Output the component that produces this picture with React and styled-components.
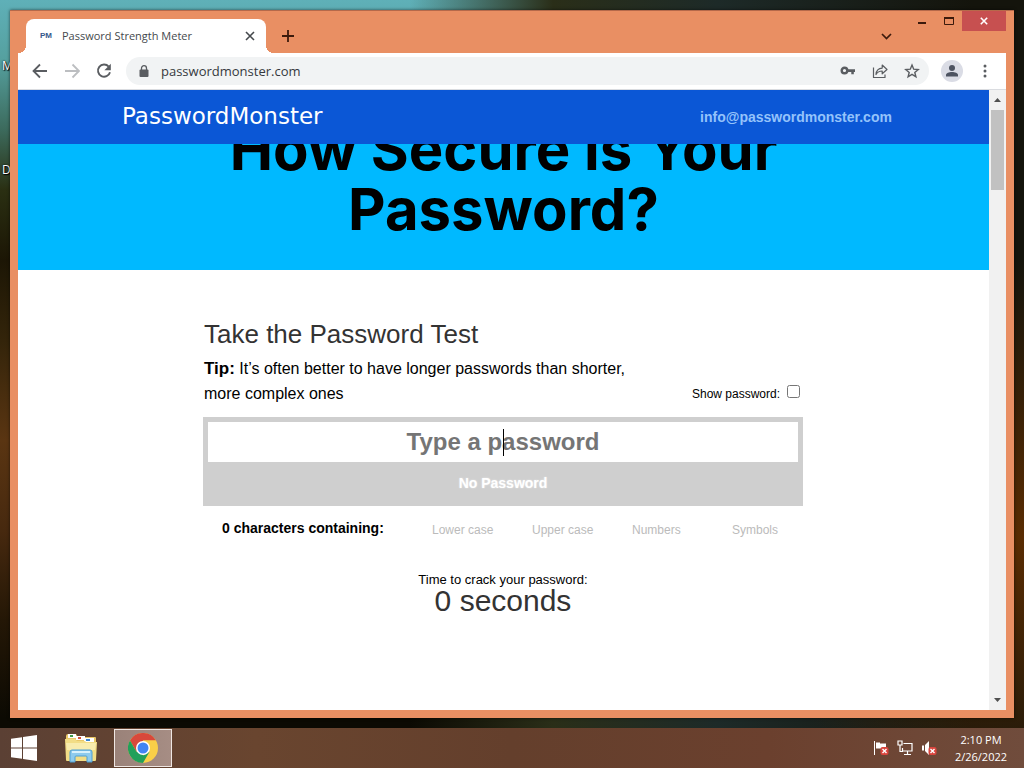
import React from "react";

import styled, { createGlobalStyle } from "styled-components";

const GlobalStyle = createGlobalStyle`
  * {
    box-sizing: border-box;
  }

  body {
    margin: 0;
    font-family: "Liberation Sans", Arial, sans-serif;
    color: #000;
  }

  button {
    padding: 0;
    border: 0;
    background: none;
    color: inherit;
    font: inherit;
  }

  a {
    color: inherit;
    text-decoration: none;
  }

  svg {
    display: block;
  }
`;

const uiFont = `"Open Sans", "Noto Sans", sans-serif`;

const Desktop = styled.div`
  position: relative;
  display: flex;
  flex-direction: column;
  min-height: 100vh;
  background:
    radial-gradient(circle at 100% 70%, #5a2c02 0, transparent 280px),
    linear-gradient(to right, transparent 40%, #2a2e18 54%, #1d2a28 70%, #14140c 95%),
    linear-gradient(
      to bottom,
      #5fb0b8 0,
      #55a09f 60px,
      #3c6a5c 130px,
      #2a2f12 190px,
      #1c1605 260px,
      #33240a 340px,
      #5a3512 440px,
      #47290f 530px,
      #241706 620px,
      #0c0a03 718px
    );
`;

const ShortcutLabel = styled.span`
  position: absolute;
  left: 2px;
  top: ${(props) => props.$top}px;
  color: #fff;
  font: 12px/16px ${uiFont};
  text-shadow: 1px 1px 1px #000, 0 0 2px #000;
`;

const Window = styled.div`
  position: relative;
  flex: 1;
  display: flex;
  flex-direction: column;
  margin: 10px;
  padding: 0 8px 8px;
  background: #e98f63;
  border-top: 1px solid #b5694a;
  box-shadow: 0 0 3px rgba(0, 0, 0, 0.6);
`;

const TitleBar = styled.div`
  display: flex;
  align-items: flex-end;
  height: 42px;
  padding-left: 8px;
  color: #3c1a0c;
`;

const Tab = styled.div`
  position: relative;
  display: flex;
  align-items: center;
  width: 240px;
  height: 34px;
  padding: 0 9px 0 14px;
  border-radius: 8px 8px 0 0;
  background: #fff;
  color: #45494d;
  font: 11px/16px ${uiFont};

  &::before,
  &::after {
    content: "";
    position: absolute;
    bottom: 0;
    width: 8px;
    height: 8px;
  }

  &::before {
    right: 100%;
    background: radial-gradient(circle at 0 0, transparent 8px, #fff 8px);
  }

  &::after {
    left: 100%;
    background: radial-gradient(circle at 100% 0, transparent 8px, #fff 8px);
  }
`;

const Favicon = styled.span`
  width: 22px;
  color: #35588c;
  font: bold 8px/16px "Liberation Sans", Arial, sans-serif;
`;

const TabTitle = styled.span`
  flex: 1;
  white-space: nowrap;
`;

const TabButton = styled.button`
  display: grid;
  place-items: center;
  width: 14px;
  height: 14px;
`;

const TabActions = styled.div`
  flex: 1;
  display: flex;
  align-items: center;
  justify-content: space-between;
  height: 34px;
  padding: 0 15px;
`;

const WindowButtons = styled.div`
  display: flex;
  align-self: flex-start;
`;

const WindowButton = styled.button`
  display: grid;
  place-items: center;
  width: ${(props) => (props.$close ? 44 : 27)}px;
  height: 20px;
  background: ${(props) => (props.$close ? "#c75050" : "none")};
  color: ${(props) => (props.$close ? "#fff" : "#3c1a0c")};
`;

const Toolbar = styled.div`
  display: flex;
  align-items: center;
  gap: 12px;
  height: 37px;
  padding: 0 11px 0 12px;
  border-bottom: 1px solid #dadce0;
  background: #fff;
  color: #5a5d61;
`;

const IconButton = styled.button`
  display: grid;
  place-items: center;
  width: 20px;
  height: 20px;
  color: ${(props) => (props.disabled ? "#bcbec1" : "inherit")};
`;

const Avatar = styled.button`
  display: grid;
  place-items: center;
  width: 22px;
  height: 22px;
  border-radius: 50%;
  background: #dadce5;
  color: #4d5361;
`;

const Omnibox = styled.div`
  flex: 1;
  display: flex;
  align-items: center;
  gap: 12px;
  height: 28px;
  padding: 0 7px 0 13px;
  border-radius: 14px;
  background: #f1f3f4;
`;

const Address = styled.input`
  flex: 1;
  min-width: 0;
  padding: 0;
  border: 0;
  outline: 0;
  background: none;
  color: #36393d;
  font: 13px/20px ${uiFont};
`;

const Viewport = styled.div`
  flex: 1;
  display: flex;
  background: #fff;
`;

const Page = styled.div`
  flex: 1;
`;

const Scrollbar = styled.div`
  display: flex;
  flex-direction: column;
  justify-content: space-between;
  width: 17px;
  padding: 0 2px;
  background: #f1f1f1;
`;

const ScrollArrow = styled.button`
  display: grid;
  place-items: center;
  width: 13px;
  height: 20px;
  color: #505050;
`;

const ScrollThumb = styled.div`
  height: 80px;
  margin-bottom: auto;
  background: #c1c1c1;
`;

const Header = styled.header`
  position: relative;
  z-index: 1;
  display: flex;
  align-items: center;
  justify-content: space-between;
  height: 54px;
  padding: 0 10% 0 104px;
  background: #0b57d6;
`;

const Logo = styled.a`
  padding-bottom: 2px;
  color: #fff;
  font: 23px/28px "DejaVu Sans", sans-serif;
`;

const Email = styled.a`
  color: #94c3fb;
  font-size: 14px;
  font-weight: bold;
`;

const Hero = styled.section`
  margin-top: -54px;
  padding: 29px 180px 31px;
  background: #00b9ff;
  text-align: center;

  h1 {
    margin: 0;
    font: bold 58px/60px Inter, sans-serif;
  }
`;

const Main = styled.main`
  max-width: 601px;
  margin: 0 auto;
  padding: 48px 1px 0 0;
`;

const Heading = styled.h2`
  margin: 0;
  padding-left: 1px;
  color: #333;
  font-size: 26px;
  font-weight: normal;
  line-height: 32px;
`;

const TipRow = styled.div`
  display: flex;
  align-items: flex-end;
  justify-content: space-between;
  padding: 6px 3px 0 1px;
`;

const Tip = styled.p`
  width: 430px;
  margin: 0;
  font-size: 16px;
  line-height: 25px;

  b {
    font-size: 17px;
  }
`;

const ShowPassword = styled.label`
  display: flex;
  align-items: center;
  gap: 7px;
  font-size: 12px;
  line-height: 24px;

  input {
    width: 13px;
    height: 13px;
    margin: 0 0 6px;
  }
`;

const Meter = styled.div`
  margin-top: 11px;
  padding: 5px;
  background: #cfcfcf;
`;

const PasswordField = styled.div`
  position: relative;

  &::after {
    content: "";
    position: absolute;
    top: 7px;
    left: 50%;
    width: 1px;
    height: 27px;
    background: #000;
  }
`;

const PasswordInput = styled.input`
  display: block;
  width: 100%;
  height: 40px;
  padding: 0;
  border: 0;
  outline: 0;
  background: #fff;
  color: #000;
  font: bold 24px/40px "Liberation Sans", Arial, sans-serif;
  text-align: center;

  &::placeholder {
    color: #757575;
    opacity: 1;
  }
`;

const Strength = styled.div`
  height: 39px;
  color: #fff;
  font-size: 14px;
  font-weight: bold;
  line-height: 42px;
  text-align: center;
  text-shadow: 0 0 2px rgba(255, 255, 255, 0.6);
`;

const Checks = styled.div`
  display: flex;
  align-items: flex-start;
  padding: 11px 0 0 19px;
  line-height: 22px;
`;

const Count = styled.div`
  flex: none;
  width: 210px;
  font-size: 14px;
  font-weight: bold;
`;

const CheckList = styled.ul`
  display: flex;
  margin: 0;
  padding: 2px 0 0;
  list-style: none;
  color: #bbb;
  font-size: 12px;

  li {
    flex: none;
    width: 100px;
  }

  li:last-child {
    width: auto;
  }
`;

const CrackTime = styled.div`
  padding-top: 31px;
  font-size: 13px;
  line-height: 16px;
  text-align: center;

  strong {
    display: block;
    color: #333;
    font-size: 30px;
    font-weight: normal;
    line-height: 26px;
  }
`;

const Taskbar = styled.footer`
  display: flex;
  align-items: center;
  height: 40px;
  background: linear-gradient(to right, #5b4034, #69452f 25%, #643f2c 50%, #6b402e 75%, #704c3c);
  color: #fff;
`;

const TaskButton = styled.button`
  display: grid;
  place-items: center;
  width: ${(props) => props.$width}px;
  height: 38px;
  margin-right: ${(props) => props.$gap || 0}px;
  border: ${(props) => (props.$active ? "1px solid #efe6e2" : "0")};
  background: ${(props) => (props.$active ? "linear-gradient(to right, #9a8279, #a68d84)" : "none")};
`;

const Tray = styled.div`
  display: flex;
  align-items: center;
  gap: 8px;
  margin-left: auto;
  padding-right: 3px;
`;

const Clock = styled.time`
  width: 80px;
  margin-left: -4px;
  font: 11px/17px ${uiFont};
  text-align: center;
`;

const BackIcon = ({ flip }) => (
  <svg width="16" height="16" viewBox="0 0 16 16" fill="none" stroke="currentColor" strokeWidth="1.8">
    {flip ? <path d="M1 8h13M8.5 1.5L15 8l-6.500 6.500" /> : <path d="M15 8H2M8 1.500L1.500 8l6.500 6.500" />}
  </svg>
);

const ReloadIcon = () => (
  <svg width="16" height="16" viewBox="0 0 16 16" fill="none">
    <path d="M12.700 3.600A6.100 6.100 0 1 0 14 9.200" stroke="currentColor" strokeWidth="1.9" />
    <path d="M14.800 0.800v6.400H8.400z" fill="currentColor" />
  </svg>
);

const LockIcon = () => (
  <svg width="10" height="13" viewBox="0 0 10 13" fill="none">
    <rect x="0.500" y="4.500" width="9" height="7.500" rx="1" fill="currentColor" />
    <path d="M2.500 5V3.200a2.500 2.500 0 0 1 5 0V5" stroke="currentColor" strokeWidth="1.300" />
  </svg>
);

const KeyIcon = () => (
  <svg width="16" height="16" viewBox="0 0 16 16" fill="none">
    <circle cx="4.500" cy="7.500" r="2.800" stroke="currentColor" strokeWidth="2.400" />
    <path d="M7 6.300h8v2.600h-1.200v2.300h-2.500V8.900H7z" fill="currentColor" />
  </svg>
);

const ShareIcon = () => (
  <svg width="16" height="16" viewBox="0 0 16 16" fill="none" stroke="currentColor" strokeWidth="1.200" strokeLinejoin="round">
    <path d="M1.500 4.500v10h11.500v-3" />
    <path d="M4 11.500c.3-4 2.600-6.200 6.200-6.400V2l4.800 4.500-4.800 4.300V8C7.400 8 5.400 9.100 4 11.500z" />
  </svg>
);

const StarIcon = () => (
  <svg width="16" height="16" viewBox="0 0 16 16" fill="none" stroke="currentColor" strokeWidth="1.400">
    <path d="M8 2l1.700 4.200 4.500.3-3.400 2.900 1.100 4.400L8 11.400l-3.900 2.400 1.100-4.400-3.400-2.900 4.500-.3z" />
  </svg>
);

const PersonIcon = () => (
  <svg width="14" height="14" viewBox="0 0 14 14" fill="currentColor">
    <circle cx="7" cy="4" r="3" />
    <path d="M1 12.500V11c0-2 3-3 6-3s6 1 6 3v1.500z" />
  </svg>
);

const MenuIcon = () => (
  <svg width="4" height="14" viewBox="0 0 4 14" fill="currentColor">
    <circle cx="2" cy="2" r="1.500" />
    <circle cx="2" cy="7" r="1.500" />
    <circle cx="2" cy="12" r="1.500" />
  </svg>
);

const CrossIcon = ({ size, width }) => (
  <svg width={size} height={size} viewBox="0 0 10 10" stroke="currentColor" strokeWidth={width}>
    <path d="M1 1l8 8M9 1L1 9" />
  </svg>
);

const ArrowIcon = ({ down }) => (
  <svg width="7" height="4" viewBox="0 0 7 4" fill="currentColor">
    <path d={down ? "M0 0h7L3.500 4z" : "M0 4h7L3.500 0z"} />
  </svg>
);

const WindowsIcon = () => (
  <svg width="26" height="26" viewBox="0 0 26 26" fill="#fff">
    <path d="M0 3.800l11-1.600V12.400H0zM12 2l14-2v12.400H12zM0 13.400h11v10.400L0 22.200zM12 13.400h14V26l-14-2z" />
  </svg>
);

const FolderIcon = () => (
  <svg width="34" height="30" viewBox="0 0 34 30">
    <path d="M2 3q0-2 2-2h8l2 3h17q1 0 1 1v20H2z" fill="#e9c868" />
    <path d="M4 1h8v4H4zM12 3h9v4h-9zM20 5h10v4H20z" fill="#fff" />
    <rect x="6" y="2" width="3" height="2" fill="#3f9a4a" />
    <rect x="14" y="4" width="3" height="2" fill="#d0503a" />
    <rect x="22" y="6" width="4" height="2" fill="#3b86d0" />
    <path d="M1 6h10l2 2h8l1 1h11l-1 18q0 1-1 1H3q-1 0-1-1z" fill="#f2dd86" />
    <path d="M2 10h30l-1 7H3z" fill="#f8ecae" />
    <path d="M6 29V19q0-2 2-2h18q2 0 2 2v10h-5v-5q0-1-1-1H12q-1 0-1 1v5z" fill="#8ecbee" stroke="#4f9fd2" />
    <path d="M8 19h18" stroke="#d8f1fc" strokeWidth="2" />
  </svg>
);

const ChromeIcon = () => (
  <svg width="30" height="30" viewBox="0 0 30 30">
    <circle cx="15" cy="15" r="15" fill="#f9cf48" />
    <path d="M2 7.500A15 15 0 0 1 28 7.500H15L8.500 18.700z" fill="#d8483b" />
    <path d="M2 7.500A15 15 0 0 0 15 30l6.500-11.200H8.500z" fill="#22a05a" />
    <path d="M28 7.500H15v15l6.500-3.700z" fill="#f9cf48" />
    <circle cx="15" cy="15" r="7" fill="#fff" />
    <circle cx="15" cy="15" r="5.500" fill="#4285f4" />
  </svg>
);

const TrayIcon = ({ muted, children }) => (
  <svg width="16" height="16" viewBox="0 0 16 16" fill="none">
    {children}
    {muted && (
      <>
        <rect x="7.500" y="7" width="8" height="8" rx="2" fill="#d9453d" />
        <path d="M9.500 9l4 4M13.500 9l-4 4" stroke="#fff" strokeWidth="1.400" />
      </>
    )}
  </svg>
);

const App = () => {
  return (
    <>
      <GlobalStyle />
      <Desktop>
        <ShortcutLabel $top={58}>M</ShortcutLabel>
        <ShortcutLabel $top={162}>D</ShortcutLabel>
        <Window>
          <TitleBar>
            <Tab>
              <Favicon>PM</Favicon>
              <TabTitle>Password Strength Meter</TabTitle>
              <TabButton aria-label="Close tab">
                <CrossIcon size={10} width={1.6} />
              </TabButton>
            </Tab>
            <TabActions>
              <TabButton aria-label="New tab">
                <svg width="12" height="12" viewBox="0 0 12 12" stroke="currentColor" strokeWidth="1.800">
                  <path d="M6 0v12M0 6h12" />
                </svg>
              </TabButton>
              <TabButton aria-label="Search tabs">
                <svg width="11" height="7" viewBox="0 0 11 7" fill="none" stroke="currentColor" strokeWidth="1.700">
                  <path d="M1 1l4.500 4.500L10 1" />
                </svg>
              </TabButton>
            </TabActions>
            <WindowButtons>
              <WindowButton aria-label="Minimize">
                <svg width="8" height="10" viewBox="0 0 8 10">
                  <path d="M0 6h8v2H0z" fill="currentColor" />
                </svg>
              </WindowButton>
              <WindowButton aria-label="Maximize">
                <svg width="10" height="8" viewBox="0 0 10 8" fill="none" stroke="currentColor">
                  <path d="M0.500 1v6.500h9V1" />
                  <path d="M0 1h10" strokeWidth="2" />
                </svg>
              </WindowButton>
              <WindowButton $close aria-label="Close">
                <CrossIcon size={8} width={2} />
              </WindowButton>
            </WindowButtons>
          </TitleBar>
          <Toolbar>
            <IconButton aria-label="Back">
              <BackIcon />
            </IconButton>
            <IconButton aria-label="Forward" disabled>
              <BackIcon flip />
            </IconButton>
            <IconButton aria-label="Reload">
              <ReloadIcon />
            </IconButton>
            <Omnibox>
              <LockIcon />
              <Address aria-label="Address" defaultValue="passwordmonster.com" />
              <IconButton aria-label="Saved passwords">
                <KeyIcon />
              </IconButton>
              <IconButton aria-label="Share">
                <ShareIcon />
              </IconButton>
              <IconButton aria-label="Bookmark">
                <StarIcon />
              </IconButton>
            </Omnibox>
            <Avatar aria-label="Profile">
              <PersonIcon />
            </Avatar>
            <IconButton aria-label="Menu">
              <MenuIcon />
            </IconButton>
          </Toolbar>
          <Viewport>
            <Page>
              <Header>
                <Logo href="#">PasswordMonster</Logo>
                <Email href="mailto:info@passwordmonster.com">info@passwordmonster.com</Email>
              </Header>
              <Hero>
                <h1>How Secure is Your Password?</h1>
              </Hero>
              <Main>
                <Heading>Take the Password Test</Heading>
                <TipRow>
                  <Tip>
                    <b>Tip:</b> It’s often better to have longer passwords than shorter, more complex ones
                  </Tip>
                  <ShowPassword>
                    Show password:
                    <input type="checkbox" />
                  </ShowPassword>
                </TipRow>
                <Meter>
                  <PasswordField>
                    <PasswordInput type="password" placeholder="Type a password" aria-label="Password" />
                  </PasswordField>
                  <Strength>No Password</Strength>
                </Meter>
                <Checks>
                  <Count>0 characters containing:</Count>
                  <CheckList>
                    <li>Lower case</li>
                    <li>Upper case</li>
                    <li>Numbers</li>
                    <li>Symbols</li>
                  </CheckList>
                </Checks>
                <CrackTime>
                  Time to crack your password:
                  <strong>0 seconds</strong>
                </CrackTime>
              </Main>
            </Page>
            <Scrollbar>
              <ScrollArrow aria-label="Scroll up">
                <ArrowIcon />
              </ScrollArrow>
              <ScrollThumb />
              <ScrollArrow aria-label="Scroll down">
                <ArrowIcon down />
              </ScrollArrow>
            </Scrollbar>
          </Viewport>
        </Window>
        <Taskbar>
          <TaskButton $width={48} $gap={4} aria-label="Start">
            <WindowsIcon />
          </TaskButton>
          <TaskButton $width={58} $gap={4} aria-label="File Explorer">
            <FolderIcon />
          </TaskButton>
          <TaskButton $width={58} $active aria-label="Google Chrome">
            <ChromeIcon />
          </TaskButton>
          <Tray>
            <TrayIcon muted>
              <path d="M1.500 1v14" stroke="#fff" />
              <path d="M3 2.500h4v1h6v6H8v-1H3z" fill="#fff" />
            </TrayIcon>
            <TrayIcon>
              <path d="M6.500 3.500H15v7.500H5.500V8M10.500 11v3M7 14.500h7" stroke="#fff" strokeWidth="1.200" />
              <path d="M1 1h4v4H1zM3 5v6.500h3" stroke="#fff" strokeWidth="1.200" />
            </TrayIcon>
            <TrayIcon muted>
              <path d="M1 5.500h2v5H1zM4 5l4-4v14l-4-4z" fill="#fff" />
            </TrayIcon>
            <Clock>
              2:10 PM
              <br />
              2/26/2022
            </Clock>
          </Tray>
        </Taskbar>
      </Desktop>
    </>
  );
};

export default App;
